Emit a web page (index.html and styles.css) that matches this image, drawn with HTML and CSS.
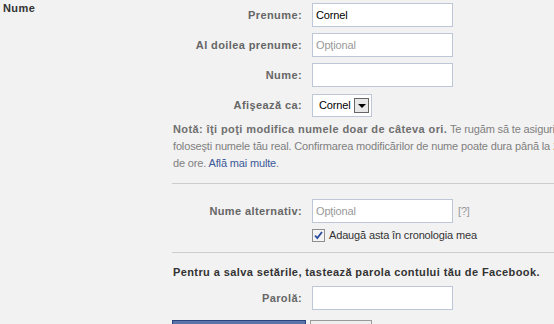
FILE: index.html
```html
<!DOCTYPE html>
<html lang="ro">
<head>
    <meta charset="UTF-8">
    <meta name="viewport" content="width=device-width, initial-scale=1.0">
    <title>Nume</title>
    <link rel="stylesheet" href="styles.css">
</head>
<body>
    <div class="page">
        <div class="side">
            <h2 class="side-title">Nume</h2>
        </div>
        <div class="main">
            <div class="row">
                <label class="label">Prenume:</label>
                <input class="field" type="text" value="Cornel">
            </div>
            <div class="row">
                <label class="label">Al doilea prenume:</label>
                <input class="field" type="text" placeholder="Opţional">
            </div>
            <div class="row">
                <label class="label">Nume:</label>
                <input class="field" type="text">
            </div>
            <div class="row">
                <label class="label">Afişează ca:</label>
                <div class="select">
                    <span class="select-text">Cornel</span>
                    <span class="select-btn"><span class="arrow"></span></span>
                </div>
            </div>
            <p class="note"><b>Notă: îţi poţi modifica numele doar de câteva ori.</b> Te rugăm să te asiguri că<br>foloseşti numele tău real. Confirmarea modificărilor de nume poate dura până la 24<br>de ore. <a href="#">Află mai multe</a>.</p>

            <div class="divider divider-first"></div>

            <div class="row">
                <label class="label">Nume alternativ:</label>
                <input class="field" type="text" placeholder="Opţional">
                <span class="hint">[?]</span>
            </div>
            <div class="check-row">
                <span class="check">
                    <svg width="11" height="11" viewBox="0 0 11 11">
                        <path d="M2 5.5 L4.3 8 L9 2" fill="none" stroke="#2a4a9e" stroke-width="1.8"/>
                    </svg>
                </span>
                <span class="check-label">Adaugă asta în cronologia mea</span>
            </div>

            <div class="divider divider-second"></div>

            <div class="save-title">Pentru a salva setările, tastează parola contului tău de Facebook.</div>
            <div class="row">
                <label class="label">Parolă:</label>
                <input class="field" type="password">
            </div>
            <div class="buttons">
                <button class="btn btn-primary">Salvează modificările</button>
                <button class="btn">Anulează</button>
            </div>
        </div>
    </div>
</body>
</html>
```
FILE: styles.css
```css
body {
    margin: 0;
    background: #f2f2f2;
    font-family: "Liberation Sans", Arial, sans-serif;
    font-size: 11px;
    letter-spacing: -0.15px;
    color: #333;
    overflow: hidden;
}
b,
.side-title,
.label,
.save-title {
    letter-spacing: 0.4px;
}
.page {
    display: flex;
}
.side {
    width: 172px;
    flex-shrink: 0;
}
.side-title {
    margin: 0;
    padding: 1px 3px;
    font-size: 11px;
    line-height: 14px;
    color: #333;
}
.main {
    flex: 1;
}
.row {
    display: flex;
    align-items: center;
    height: 30px;
}
.label {
    width: 130px;
    padding-right: 10px;
    text-align: right;
    font-weight: bold;
    color: #666;
}
.field {
    width: 141px;
    height: 24px;
    box-sizing: border-box;
    margin: 0;
    padding: 0 3px;
    border: 1px solid #bdc7d8;
    background: #fff;
    font: inherit;
    letter-spacing: -0.15px;
    color: #000;
}
.field::placeholder {
    color: #999;
}
.select {
    width: 60px;
    height: 23px;
    box-sizing: border-box;
    border: 1px solid #bdc7d8;
    background: #fff;
    display: flex;
    align-items: center;
    padding-left: 6px;
    color: #000;
}
.select-text {
    flex: 1;
}
.select-btn {
    width: 15px;
    height: 15px;
    box-sizing: border-box;
    margin-right: 2px;
    border: 1px solid #666;
    background: #e8e8e8;
    display: flex;
    align-items: center;
    justify-content: center;
}
.arrow {
    width: 0;
    height: 0;
    border-left: 4px solid transparent;
    border-right: 4px solid transparent;
    border-top: 4px solid #000;
    margin-top: 1px;
}
.note {
    margin: 0;
    padding: 1px 0 0 1px;
    line-height: 17px;
    color: #808080;
    white-space: nowrap;
}
.note b {
    color: #6f6f6f;
}
.note a {
    color: #3b5998;
    text-decoration: none;
}
.divider {
    border-top: 1px solid #ccc;
}
.divider-first {
    margin: 11px 0 12px;
}
.divider-second {
    margin: 8px 0 11px;
}
.hint {
    margin-left: 5px;
    color: #999;
}
.check-row {
    display: flex;
    align-items: center;
    height: 18px;
    padding-left: 140px;
}
.check {
    width: 13px;
    height: 13px;
    box-sizing: border-box;
    border: 1px solid #8f8f8f;
    background: #f4f4f4;
    display: flex;
    align-items: center;
    justify-content: center;
}
.check-label {
    margin-left: 4px;
    color: #333;
}
.save-title {
    padding-left: 1px;
    line-height: 17px;
    font-weight: bold;
    color: #333;
    white-space: nowrap;
}
.row + .buttons {
    margin-top: 7px;
}
.save-title + .row {
    margin-top: 2px;
}
.buttons {
    display: flex;
    gap: 4px;
}
.btn {
    height: 22px;
    width: 62px;
    margin: 0;
    border: 1px solid #999;
    background: #eee;
    font: inherit;
    font-weight: bold;
    color: #333;
}
.btn-primary {
    width: 134px;
    border-color: #29447e;
    background: #5b74a8;
    color: #fff;
}
```
